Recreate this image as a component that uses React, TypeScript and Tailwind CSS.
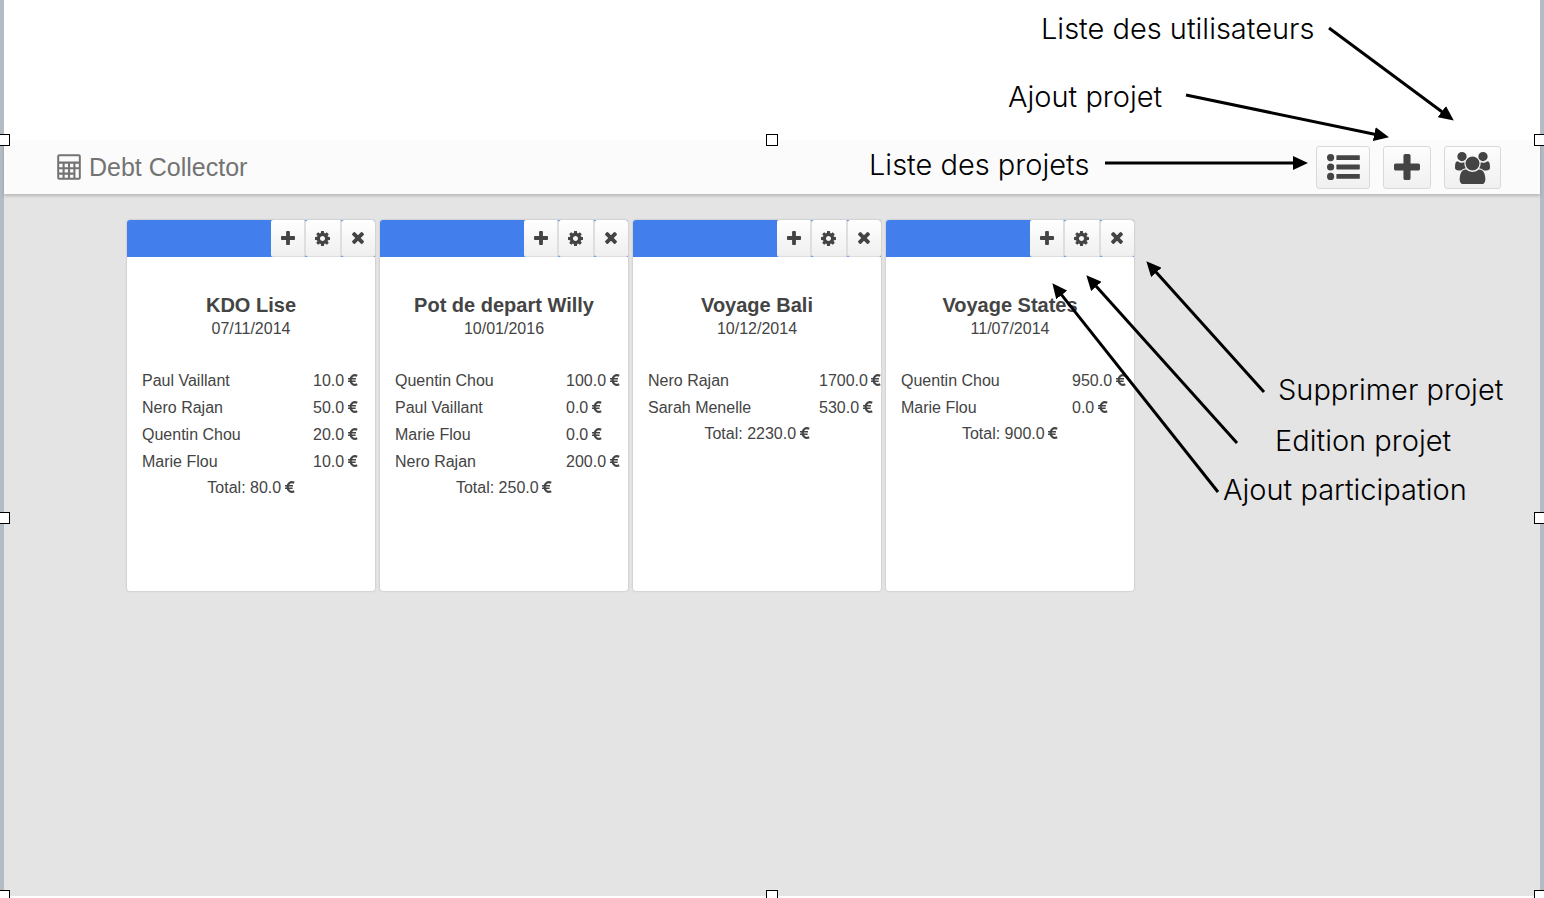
import type { ReactNode } from "react";

type IconProps = { className?: string };

const PlusIcon = ({ className }: IconProps) => (
  <svg viewBox="192 128 1408 1408" className={className} fill="currentColor" aria-hidden="true">
    <path d="M1600 736v192q0 40-28 68t-68 28h-416v416q0 40-28 68t-68 28h-192q-40 0-68-28t-28-68v-416h-416q-40 0-68-28t-28-68v-192q0-40 28-68t68-28h416v-416q0-40 28-68t68-28h192q40 0 68 28t28 68v416h416q40 0 68 28t28 68z" />
  </svg>
);

const GearIcon = ({ className }: IconProps) => (
  <svg viewBox="128 128 1536 1536" className={className} fill="currentColor" aria-hidden="true">
    <path d="M1152 896q0-106-75-181t-181-75-181 75-75 181 75 181 181 75 181-75 75-181zm512-109v222q0 12-8 23t-20 13l-185 28q-19 54-39 91 35 50 107 138 10 12 10 25t-9 23q-27 37-99 108t-94 71q-12 0-26-9l-138-108q-44 23-91 38-16 136-29 186-7 28-36 28h-222q-14 0-24.5-8.5t-11.5-21.5l-28-184q-49-16-90-37l-141 107q-10 9-25 9-14 0-25-11-126-114-165-168-7-10-7-23 0-12 8-23 15-21 51-66.5t54-70.5q-27-50-41-99l-183-27q-13-2-21-12.5t-8-23.5v-222q0-12 8-23t19-13l186-28q14-46 39-92-40-57-107-138-10-12-10-24 0-10 9-23 26-36 98.5-107.5t94.5-71.5q13 0 26 10l138 107q44-23 91-38 16-136 29-186 7-28 36-28h222q14 0 24.5 8.5t11.5 21.5l28 184q49 16 90 37l142-107q9-9 24-9 13 0 25 10 129 119 165 170 7 8 7 22 0 12-8 23-15 21-51 66.5t-54 70.5q26 50 41 98l183 28q13 2 21 12.5t8 23.5z" />
  </svg>
);

const CloseIcon = ({ className }: IconProps) => (
  <svg viewBox="302 366 1188 1188" className={className} fill="currentColor" aria-hidden="true">
    <path d="M1490 1322q0 40-28 68l-136 136q-28 28-68 28t-68-28l-294-294-294 294q-28 28-68 28t-68-28l-136-136q-28-28-28-68t28-68l294-294-294-294q-28-28-28-68t28-68l136-136q28-28 68-28t68 28l294 294 294-294q28-28 68-28t68 28l136 136q28 28 28 68t-28 68l-294 294 294 294q28 28 28 68z" />
  </svg>
);

const ListIcon = ({ className }: IconProps) => (
  <svg viewBox="0 0 33 26" className={className} fill="currentColor" aria-hidden="true">
    <circle cx="3.6" cy="3.6" r="3.6" />
    <circle cx="3.6" cy="13" r="3.6" />
    <circle cx="3.6" cy="22.4" r="3.6" />
    <rect x="9.4" y="1.2" width="23.4" height="4.8" rx="0.6" />
    <rect x="9.4" y="10.6" width="23.4" height="4.8" rx="0.6" />
    <rect x="9.4" y="20" width="23.4" height="4.8" rx="0.6" />
  </svg>
);

const UsersIcon = ({ className }: IconProps) => (
  <svg viewBox="0 -40 1920 1792" className={className} fill="currentColor" aria-hidden="true">
    <path d="M593 896q-162 5-265 128h-134q-82 0-138-40.5t-56-118.5q0-353 124-353 6 0 43.5 21t97.5 42.5 119 21.5q67 0 133-23-5 37-5 66 0 139 81 256zm1071 637q0 120-73 189.5t-194 69.5h-874q-121 0-194-69.5t-73-189.5q0-53 3.5-103.5t14-109 26.5-108.5 43-97.5 62-81 85.5-53.5 111.5-20q10 0 43 21.5t73 48 107 48 135 21.5 135-21.5 107-48 73-48 43-21.5q61 0 111.5 20t85.5 53.5 62 81 43 97.5 26.5 108.5 14 109 3.5 103.5zm-1024-1277q0 106-75 181t-181 75-181-75-75-181 75-181 181-75 181 75 75 181zm704 384q0 159-112.5 271.5t-271.5 112.5-271.5-112.5-112.5-271.5 112.5-271.5 271.5-112.5 271.5 112.5 112.5 271.5zm576 225q0 78-56 118.5t-138 40.5h-134q-103-123-265-128 81-117 81-256 0-29-5-66 66 23 133 23 59 0 119-21.5t97.5-42.5 43.5-21q124 0 124 353zm-128-609q0 106-75 181t-181 75-181-75-75-181 75-181 181-75 181 75 75 181z" />
  </svg>
);

const EuroIcon = () => (
  <svg viewBox="0 0 10 12" className="-ml-px inline-block h-3 w-2.5 align-baseline" fill="none" stroke="currentColor" role="img" aria-label="euros">
    <path d="M9.2 1.8C5.6 0 2.6 2.4 2.6 6S5.6 12 9.2 10.2" strokeWidth="2.2" />
    <path d="M0 4.7h8M0 7.2h7.6" strokeWidth="1.5" />
  </svg>
);

const CalculatorIcon = ({ className }: IconProps) => (
  <svg viewBox="0 0 24 26" className={className} fill="none" stroke="currentColor" aria-hidden="true">
    <rect x="1.2" y="1.2" width="21.6" height="23.6" rx="1" strokeWidth="2" />
    <path d="M1 8.6h22M1 14.2h16.6M1 19.6h16.6M6.6 8v17M12 8v17M17.4 8v17M17 14.2h6" strokeWidth="2.1" />
  </svg>
);

type Project = {
  name: string;
  date: string;
  shares: [string, string][];
  total: string;
};

const projects: Project[] = [
  {
    name: "KDO Lise",
    date: "07/11/2014",
    shares: [["Paul Vaillant", "10.0"], ["Nero Rajan", "50.0"], ["Quentin Chou", "20.0"], ["Marie Flou", "10.0"]],
    total: "80.0",
  },
  {
    name: "Pot de depart Willy",
    date: "10/01/2016",
    shares: [["Quentin Chou", "100.0"], ["Paul Vaillant", "0.0"], ["Marie Flou", "0.0"], ["Nero Rajan", "200.0"]],
    total: "250.0",
  },
  {
    name: "Voyage Bali",
    date: "10/12/2014",
    shares: [["Nero Rajan", "1700.0"], ["Sarah Menelle", "530.0"]],
    total: "2230.0",
  },
  {
    name: "Voyage States",
    date: "11/07/2014",
    shares: [["Quentin Chou", "950.0"], ["Marie Flou", "0.0"]],
    total: "900.0",
  },
];

function CardButton({ label, children }: { label: string; children: ReactNode }) {
  return (
    <button
      type="button"
      aria-label={label}
      className="flex flex-1 items-center justify-center rounded-xs border-r-2 border-b border-[#dedede] bg-linear-to-b from-white to-[#efefef] last:border-r-0"
    >
      {children}
    </button>
  );
}

function ProjectCard({ project }: { project: Project }) {
  return (
    <article className="h-[371px] w-[248px] overflow-hidden rounded-[3px] bg-white shadow-[0_0_2px_rgba(0,0,0,0.25)]">
      <div className="flex h-[37px] justify-end bg-[#427fed]">
        <div className="flex w-[104px]">
          <CardButton label="Ajout participation">
            <PlusIcon className="size-3.5" />
          </CardButton>
          <CardButton label="Edition projet">
            <GearIcon className="size-[15px]" />
          </CardButton>
          <CardButton label="Supprimer projet">
            <CloseIcon className="size-3" />
          </CardButton>
        </div>
      </div>
      <h2 className="mt-9 text-center text-xl leading-6 font-bold">{project.name}</h2>
      <p className="text-center leading-6">{project.date}</p>
      <table className="mt-[26px] ml-[15px] text-left">
        <tbody>
          {project.shares.map(([person, amount]) => (
            <tr key={person}>
              <th scope="row" className="h-[27px] min-w-[171px] p-0 font-normal">{person}</th>
              <td className="h-[27px] p-0 whitespace-nowrap">
                {amount} <EuroIcon />
              </td>
            </tr>
          ))}
        </tbody>
      </table>
      <p className="text-center leading-[26px]">
        Total: {project.total} <EuroIcon />
      </p>
    </article>
  );
}

const toolButton =
  "flex h-[43px] items-center justify-center rounded-[3px] border border-[#d9d9d9] bg-linear-to-b from-[#fdfdfd] to-[#f0f0f0]";

const handles = [
  "left-0 top-0", "left-1/2 top-0", "left-full top-0",
  "left-0 top-1/2", "left-full top-1/2",
  "left-0 top-full", "left-1/2 top-full", "left-full top-full",
];

const notes = [
  { text: "Liste des utilisateurs", place: "left-[1041px] top-[9px]" },
  { text: "Ajout projet", place: "left-[1008px] top-[77px]" },
  { text: "Liste des projets", place: "left-[869px] top-[145px]" },
  { text: "Supprimer projet", place: "left-[1278px] top-[370px]" },
  { text: "Edition projet", place: "left-[1275px] top-[421px]" },
  { text: "Ajout participation", place: "left-[1223px] top-[470px]" },
];

const arrows = [
  [1329, 28, 1453, 120],
  [1186, 95, 1388, 137],
  [1105, 163, 1307, 163],
  [1264, 392, 1147, 262],
  [1237, 443, 1087, 276],
  [1218, 492, 1053, 284],
];

export default function App() {
  return (
    <div className="relative flex min-h-screen overflow-hidden bg-[#b3bbc3] px-1 font-['Liberation_Sans',Arial,sans-serif] text-base text-[#444]">
      <div className="flex flex-1 flex-col bg-white pb-0.5">
        <div className="h-[140px]" />
        <div className="relative flex flex-1 flex-col bg-[#e4e4e4]">
          <header className="flex h-[54px] items-center justify-between bg-[#fbfbfb] pr-[39px] pl-[53px] shadow-[0_2px_3px_rgba(0,0,0,0.2)]">
            <h1 className="flex items-center gap-2 text-[25px] leading-8 text-[#737373]">
              <CalculatorIcon className="h-[26px] w-6" />
              Debt Collector
            </h1>
            <nav className="flex gap-[13px]">
              <button type="button" aria-label="Liste des projets" className={toolButton + " w-[54px]"}>
                <ListIcon className="h-[26px] w-[33px]" />
              </button>
              <button type="button" aria-label="Ajout projet" className={toolButton + " w-12"}>
                <PlusIcon className="size-[26px]" />
              </button>
              <button type="button" aria-label="Liste des utilisateurs" className={toolButton + " w-[57px]"}>
                <UsersIcon className="h-[33px] w-[35px]" />
              </button>
            </nav>
          </header>
          <main className="flex flex-wrap gap-[5px] pt-[26px] pl-[123px]">
            {projects.map((project) => (
              <ProjectCard key={project.name} project={project} />
            ))}
          </main>
          {handles.map((place) => (
            <span key={place} className={"absolute size-3 -translate-1/2 border border-black bg-white " + place} />
          ))}
        </div>
      </div>

      <svg className="pointer-events-none absolute inset-0 size-full" aria-hidden="true">
        <defs>
          <marker id="head" viewBox="0 0 15 14" refX="15" refY="7" markerWidth="15" markerHeight="14" markerUnits="userSpaceOnUse" orient="auto">
            <path d="M0 0L15 7L0 14z" />
          </marker>
        </defs>
        {arrows.map(([x1, y1, x2, y2]) => {
          const length = Math.hypot(x2 - x1, y2 - y1);
          const unitX = (x2 - x1) / length;
          const unitY = (y2 - y1) / length;
          return (
            <g key={x1}>
              <line x1={x1} y1={y1} x2={x2 - unitX * 10} y2={y2 - unitY * 10} stroke="black" strokeWidth="3" />
              <line x1={x1} y1={y1} x2={x2 + unitX} y2={y2 + unitY} stroke="none" markerEnd="url(#head)" />
            </g>
          );
        })}
      </svg>
      {notes.map((note) => (
        <p
          key={note.text}
          className={"absolute font-[Inter,'Liberation_Sans',sans-serif] text-[29px] leading-10 font-light whitespace-nowrap text-black " + note.place}
        >
          {note.text}
        </p>
      ))}
    </div>
  );
}
